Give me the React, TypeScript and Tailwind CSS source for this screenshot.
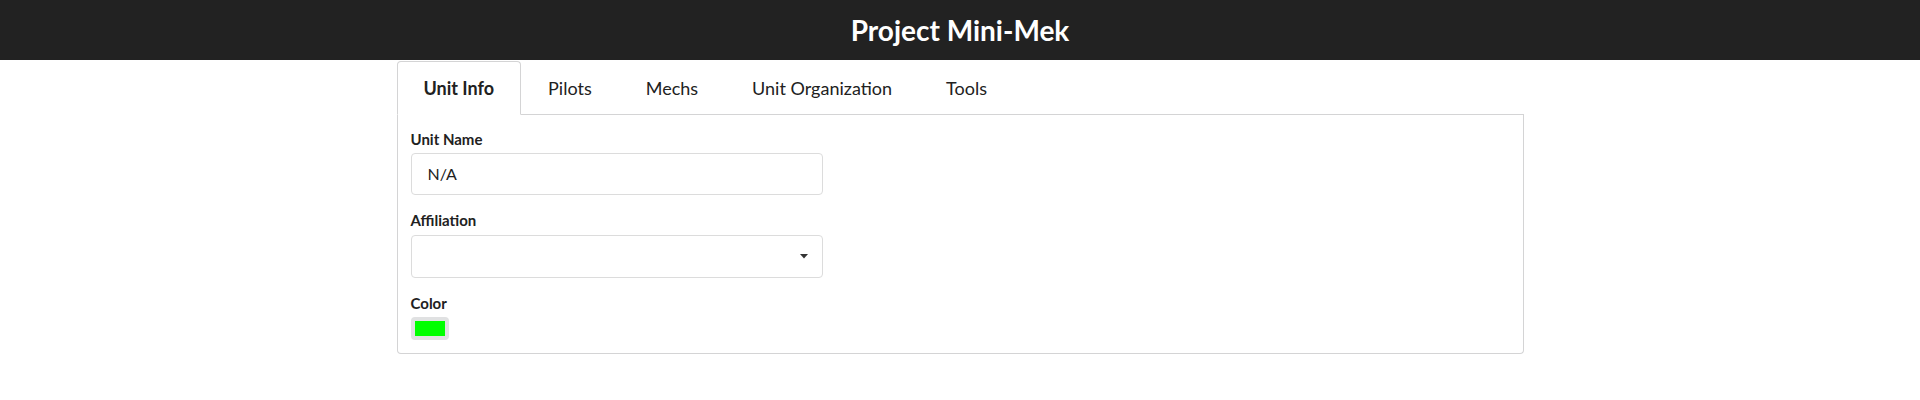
const TABS = ['Unit Info', 'Pilots', 'Mechs', 'Unit Organization', 'Tools'];

export default function App() {
  return (
    <div className="min-h-screen bg-white text-[#212121] font-['Lato','Liberation_Sans',sans-serif]">
      <header className="h-[60px] bg-[#222222] flex items-center justify-center">
        <h1 className="text-[28px] font-bold text-white leading-none">Project Mini-Mek</h1>
      </header>

      <div className="w-[1127px] mx-auto mt-px">
        <nav className="flex items-end border-b border-[#d4d4d5]">
          {TABS.map((tab, i) => (
            <div
              key={tab}
              className={
                i === 0
                  ? 'px-[26px] py-[17px] text-[18px] leading-none font-bold border border-[#d4d4d5] border-b-white rounded-t-[4px] bg-white -mb-px'
                  : 'px-[26px] py-[17px] text-[18px] leading-none border border-transparent -mb-px'
              }
            >
              {tab}
            </div>
          ))}
        </nav>

        <section className="border border-t-0 border-[#d4d4d5] rounded-b-[4px] px-[13px] pt-[15px] pb-[13px]">
          <div className="w-[412px] flex flex-col">
            <label className="text-[15px] leading-[18px] font-bold">Unit Name</label>
            <div className="mt-[5px] h-[42px] border border-[#dcdcdc] rounded-[4px] flex items-center px-4 text-[16px]">
              N/A
            </div>

            <label className="mt-[16px] text-[15px] leading-[18px] font-bold">Affiliation</label>
            <div className="mt-[6px] h-[43px] border border-[#dcdcdc] rounded-[4px] flex items-center justify-end pr-[14px]">
              <svg width="8" height="5" viewBox="0 0 8 5" className="fill-[#333333]">
                <path d="M0 0h8L4 4.5z" />
              </svg>
            </div>

            <label className="mt-[16px] text-[15px] leading-[18px] font-bold">Color</label>
            <div className="mt-[5px] w-[38px] h-[23px] rounded-[4px] bg-[#e0e1e2] p-[4px]">
              <div className="w-[30px] h-[15px] bg-[#00ff00]" />
            </div>
          </div>
        </section>
      </div>
    </div>
  );
}
